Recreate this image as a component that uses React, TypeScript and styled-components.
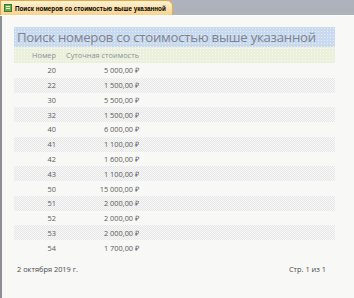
import React from "react";
import styled, { createGlobalStyle } from "styled-components";

const Global = createGlobalStyle`
  html, body { margin: 0; padding: 0; }
  body { width: 354px; height: 298px; overflow: hidden; background: #f7f7f5; font-family: "Open Sans", "Liberation Sans", sans-serif; }
`;

const Frame = styled.div`
  width: 354px;
  height: 298px;
  display: flex;
  flex-direction: column;
`;

const TabStrip = styled.div`
  height: 15px;
  background: #aeb2ba;
  display: flex;
  align-items: flex-end;
  border-bottom: 1px solid #ffffff;
`;

const Tab = styled.div`
  height: 15px;
  width: 173px;
  box-sizing: border-box;
  background: linear-gradient(#fff3d4, #f8d08a);
  border: 1px solid #e5a94c;
  border-bottom: none;
  border-radius: 0 6px 0 0;
  display: flex;
  align-items: center;
  gap: 3px;
  padding-left: 3px;
  font-family: "Liberation Sans", sans-serif;
  font-size: 6.3px;
  font-weight: bold;
  color: #000;
  white-space: nowrap;
`;

const TabIcon = styled.svg`
  width: 8px;
  height: 8px;
  flex: none;
`;

const Page = styled.div`
  flex: 1;
  border-left: 2px solid #8e9096;
  background: #f8f8f6;
  padding: 11px 0 0 12px;
  display: flex;
  flex-direction: column;
`;

const Report = styled.div`
  width: 321px;
  display: flex;
  flex-direction: column;
`;

const Title = styled.div`
  height: 20px;
  background-color: #c8d9f0;
  background-image: radial-gradient(circle, rgba(255,255,255,0.55) 0.5px, transparent 0.6px);
  background-size: 3px 3px;
  padding-left: 3px;
  display: flex;
  align-items: center;
  font-size: 13.2px;
  letter-spacing: -0.25px;
  color: #7d838b;
  white-space: nowrap;
`;

const Grid = styled.div`
  display: grid;
  grid-template-columns: 42px 83px 1fr;
  grid-template-rows: 16px repeat(13, 14.77px);
`;

const Row = styled.div<{ $kind: "head" | "even" | "odd" }>`
  display: contents;
  & > div {
    background-color: ${p => (p.$kind === "head" ? "#eaf0dc" : p.$kind === "odd" ? "#ececec" : "transparent")};
    background-image: ${p =>
      p.$kind === "head"
        ? "radial-gradient(circle, rgba(255,255,255,0.7) 0.5px, transparent 0.6px)"
        : p.$kind === "odd"
        ? "repeating-conic-gradient(#e6e6e6 0 25%, #f8f8f8 0 50%)"
        : "none"};
    background-size: ${p => (p.$kind === "head" ? "3px 3px" : "2px 2px")};
    color: ${p => (p.$kind === "head" ? "#8a8f94" : "#5a5a5a")};
  }
`;

const Cell = styled.div`
  display: flex;
  align-items: center;
  justify-content: flex-end;
  font-size: 7.4px;
  white-space: nowrap;
`;

const Footer = styled.div`
  width: 309px;
  margin-top: 9px;
  padding-left: 3px;
  display: flex;
  justify-content: space-between;
  font-size: 7.4px;
  color: #4a4a4a;
`;

const data: [number, string][] = [
  [20, "5 000,00 ₽"],
  [22, "1 500,00 ₽"],
  [30, "5 500,00 ₽"],
  [32, "1 500,00 ₽"],
  [40, "6 000,00 ₽"],
  [41, "1 100,00 ₽"],
  [42, "1 600,00 ₽"],
  [43, "1 100,00 ₽"],
  [50, "15 000,00 ₽"],
  [51, "2 000,00 ₽"],
  [52, "2 000,00 ₽"],
  [53, "2 000,00 ₽"],
  [54, "1 700,00 ₽"],
];

export default function App() {
  return (
    <Frame>
      <Global />
      <TabStrip>
        <Tab>
          <TabIcon viewBox="0 0 8 8">
            <rect x="0.5" y="0.5" width="7" height="7" fill="#6fae4a" stroke="#3d7a2a" />
            <rect x="2" y="2" width="4" height="1" fill="#e9f5dc" />
            <rect x="2" y="4" width="4" height="1" fill="#e9f5dc" />
          </TabIcon>
          Поиск номеров со стоимостью выше указанной
        </Tab>
      </TabStrip>
      <Page>
        <Report>
          <Title>Поиск номеров со стоимостью выше указанной</Title>
          <Grid>
            <Row $kind="head">
              <Cell>Номер</Cell>
              <Cell>Суточная стоимость</Cell>
              <Cell />
            </Row>
            {data.map(([n, c], i) => (
              <Row key={n} $kind={i % 2 ? "odd" : "even"}>
                <Cell>{n}</Cell>
                <Cell>{c}</Cell>
                <Cell />
              </Row>
            ))}
          </Grid>
          <Footer>
            <span>2 октября 2019 г.</span>
            <span>Стр. 1 из 1</span>
          </Footer>
        </Report>
      </Page>
    </Frame>
  );
}
